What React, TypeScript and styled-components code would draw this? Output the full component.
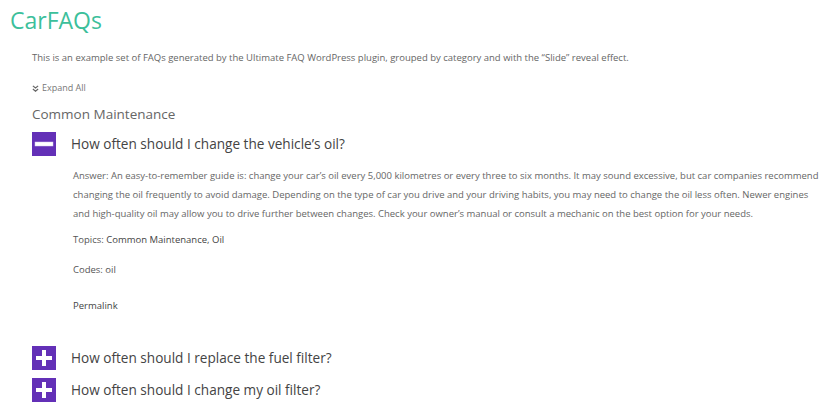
import React from "react";
import styled, { createGlobalStyle } from "styled-components";

const GlobalStyle = createGlobalStyle`
  html, body {
    margin: 0;
    padding: 0;
    background: #fff;
  }
  body {
    font-family: "Open Sans", "Noto Sans", sans-serif;
    color: #555;
  }
`;

const Page = styled.div`
  width: 835px;
  height: 402px;
  overflow: hidden;
  box-sizing: border-box;
  padding: 0 0 0 10px;
`;

const Title = styled.h1`
  margin: 0;
  padding-top: 2px;
  font-size: 23px;
  line-height: 36px;
  font-weight: 400;
  color: #3cbf9b;
`;

const Content = styled.div`
  padding-left: 22px;
`;

const Intro = styled.p`
  margin: 12px 0 0;
  font-size: 9.5px;
  line-height: 16px;
  color: #666;
`;

const ExpandAll = styled.div`
  display: flex;
  align-items: center;
  gap: 3px;
  margin-top: 15px;
  font-size: 9px;
  line-height: 14px;
  color: #777;
`;

const Category = styled.h2`
  margin: 8px 0 0;
  font-size: 13.5px;
  line-height: 22px;
  font-weight: 400;
  color: #666;
`;

const Question = styled.div<{ $first?: boolean }>`
  display: flex;
  align-items: center;
  gap: 15px;
  margin-top: ${(p) => (p.$first ? "7px" : "8px")};
`;

const Toggle = styled.div`
  width: 24px;
  height: 24px;
  flex: none;
  display: flex;
  align-items: center;
  justify-content: center;
  background: #6330b7;
`;

const QuestionText = styled.span`
  font-size: 13.6px;
  line-height: 24px;
  color: #444;
`;

const Answer = styled.div`
  max-width: 752px;
  padding-left: 41px;
  margin-top: 10px;
  padding-bottom: 25px;
  font-size: 9.5px;
  color: #666;
`;

const AnswerBody = styled.p`
  margin: 0;
  line-height: 19px;
`;

const Meta = styled.p<{ $gap: number }>`
  margin: ${(p) => p.$gap}px 0 0;
  line-height: 14px;
  color: #555;
`;

const Value = styled.span`
  color: #444;
`;

function Minus() {
  return (
    <svg width="20" height="6" viewBox="0 0 20 6">
      <rect x="1" y="1" width="18" height="4" fill="#fff" stroke="#d8ccf0" strokeWidth="0.5" />
    </svg>
  );
}

function Plus() {
  return (
    <svg width="18" height="18" viewBox="0 0 18 18">
      <rect x="7" y="1" width="4" height="16" fill="#fff" />
      <rect x="1" y="7" width="16" height="4" fill="#fff" />
    </svg>
  );
}

function Chevrons() {
  return (
    <svg width="7" height="7" viewBox="0 0 8 8">
      <path d="M1 1l3 2.5L7 1M1 4.5L4 7l3-2.5" fill="none" stroke="#666" strokeWidth="1.4" />
    </svg>
  );
}

export default function App() {
  return (
    <Page>
      <GlobalStyle />
      <Title>CarFAQs</Title>
      <Content>
        <Intro>
          This is an example set of FAQs generated by the Ultimate FAQ WordPress plugin, grouped by
          category and with the “Slide” reveal effect.
        </Intro>
        <ExpandAll>
          <Chevrons />
          Expand All
        </ExpandAll>
        <Category>Common Maintenance</Category>

        <Question $first>
          <Toggle>
            <Minus />
          </Toggle>
          <QuestionText>How often should I change the vehicle’s oil?</QuestionText>
        </Question>
        <Answer>
          <AnswerBody>
            Answer: An easy-to-remember guide is: change your car’s oil every 5,000 kilometres or
            every three to six months. It may sound excessive, but car companies recommend changing
            the oil frequently to avoid damage. Depending on the type of car you drive and your
            driving habits, you may need to change the oil less often. Newer engines and
            high-quality oil may allow you to drive further between changes. Check your owner’s
            manual or consult a mechanic on the best option for your needs.
          </AnswerBody>
          <Meta $gap={10}>
            Topics: <Value>Common Maintenance, Oil</Value>
          </Meta>
          <Meta $gap={16}>Codes: oil</Meta>
          <Meta $gap={22}>
            <Value>Permalink</Value>
          </Meta>
        </Answer>

        <Question>
          <Toggle>
            <Plus />
          </Toggle>
          <QuestionText>How often should I replace the fuel filter?</QuestionText>
        </Question>
        <Question>
          <Toggle>
            <Plus />
          </Toggle>
          <QuestionText>How often should I change my oil filter?</QuestionText>
        </Question>
      </Content>
    </Page>
  );
}
